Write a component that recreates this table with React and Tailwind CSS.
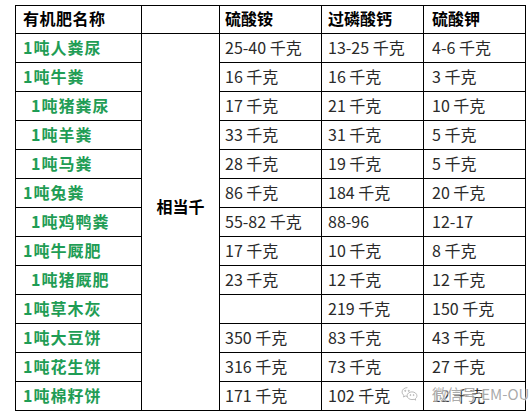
import React from "react";

const rows = [
  ["1吨人粪尿", "25-40 千克", "13-25 千克", "4-6 千克", false],
  ["1吨牛粪", "16 千克", "16 千克", "3 千克", false],
  ["1吨猪粪尿", "17 千克", "21 千克", "10 千克", true],
  ["1吨羊粪", "33 千克", "31 千克", "5 千克", true],
  ["1吨马粪", "28 千克", "19 千克", "5 千克", true],
  ["1吨兔粪", "86 千克", "184 千克", "20 千克", false],
  ["1吨鸡鸭粪", "55-82 千克", "88-96", "12-17", true],
  ["1吨牛厩肥", "17 千克", "10 千克", "8 千克", false],
  ["1吨猪厩肥", "23 千克", "12 千克", "12 千克", true],
  ["1吨草木灰", "", "219 千克", "150 千克", false],
  ["1吨大豆饼", "350 千克", "83 千克", "43 千克", false],
  ["1吨花生饼", "316 千克", "73 千克", "27 千克", false],
  ["1吨棉籽饼", "171 千克", "102 千克", "12 千克", false],
];

function WeChatIcon() {
  return (
    <svg width="17" height="16" viewBox="0 0 24 22" fill="none" stroke="#b8b8b8" strokeWidth="1.4">
      <path d="M9 2C4.6 2 1.5 4.8 1.5 8.2c0 2 1 3.6 2.7 4.8l-.7 2.3 2.7-1.4c.9.3 1.8.4 2.8.4" />
      <path d="M15.5 8c3.8 0 7 2.5 7 5.6 0 1.7-.9 3.1-2.3 4.1l.5 2-2.2-1.2c-.9.3-1.9.4-3 .4-3.8 0-6.9-2.5-6.9-5.5S11.7 8 15.5 8z" />
      <circle cx="6" cy="6.5" r=".8" fill="#b8b8b8" />
      <circle cx="11" cy="6.5" r=".8" fill="#b8b8b8" />
      <circle cx="13.3" cy="12.5" r=".7" fill="#b8b8b8" />
      <circle cx="17.8" cy="12.5" r=".7" fill="#b8b8b8" />
    </svg>
  );
}

export default function App() {
  return (
    <div className="relative w-[530px] h-[415px] bg-white overflow-hidden font-['Noto_Sans_CJK_SC','Noto_Sans',sans-serif]">
      <div className="pt-[5px] pl-[15px]">
        <table className="border-collapse table-fixed w-[511px] text-[16px] leading-4">
          <colgroup>
            <col className="w-[126px]" />
            <col className="w-[78px]" />
            <col className="w-[102px]" />
            <col className="w-[102px]" />
            <col className="w-[102px]" />
          </colgroup>
          <tbody>
            <tr className="h-[28px]">
              <td className="border border-black align-top pt-[4px] pl-[7px] font-bold text-black tracking-[0.5px]">有机肥名称</td>
              <td className="border border-black"></td>
              <td className="border border-black align-top pt-[4px] pl-[5px] font-bold text-black">硫酸铵</td>
              <td className="border border-black align-top pt-[4px] pl-[6px] font-bold text-black">过磷酸钙</td>
              <td className="border border-black align-top pt-[4px] pl-[8px] font-bold text-black">硫酸钾</td>
            </tr>
            {rows.map((r, i) => (
              <tr key={i} className="h-[29px]">
                <td
                  className={
                    "border border-black align-top pt-[5px] font-bold tracking-[1px] text-[#1f9d55] " +
                    (r[4] ? "pl-[15px]" : "pl-[7px]")
                  }
                >
                  {r[0]}
                </td>
                {i === 0 && (
                  <td rowSpan={13} className="border border-black align-middle text-center pb-[33px] font-bold text-black">
                    相当千
                  </td>
                )}
                <td className="border border-black align-top pt-[5px] pl-[5px] text-[#2a2a2a]">{r[1]}</td>
                <td className="border border-black align-top pt-[5px] pl-[6px] text-[#2a2a2a]">{r[2]}</td>
                <td className="border border-black align-top pt-[5px] pl-[8px] text-[#2a2a2a]">{r[3]}</td>
              </tr>
            ))}
          </tbody>
        </table>
      </div>
      <div className="absolute left-[401px] top-[386px] flex items-center gap-[14px]">
        <WeChatIcon />
        <span className="text-[15px] leading-4 text-[#a0a0a0]/90 font-['Noto_Sans_CJK_SC','Liberation_Sans',sans-serif] whitespace-nowrap [text-shadow:0_0_2px_#fff,0_0_2px_#fff]">
          微信号:EM-OUN
        </span>
      </div>
    </div>
  );
}
